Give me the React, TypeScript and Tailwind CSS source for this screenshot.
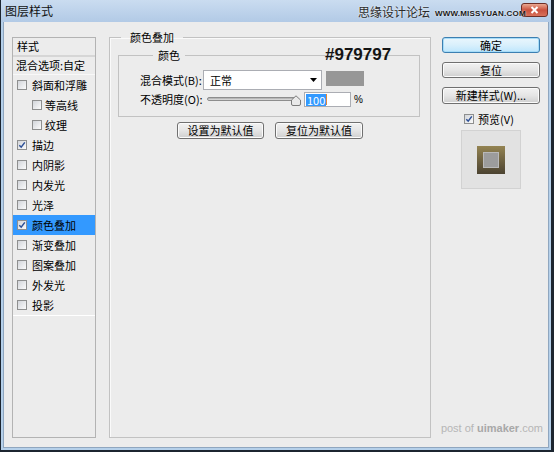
import React from 'react';

const Box = ({ checked }: { checked?: boolean }) => (
  <span className="relative w-[10px] h-[10px] shrink-0 border border-[#8e8f8f] bg-gradient-to-br from-[#d2d5da] to-[#fbfbfb]">
    {checked && (
      <svg width="8" height="8" viewBox="0 0 8 8" className="absolute left-0 top-0">
        <path d="M1.3 4.2 L3.2 6.2 L6.8 1.4" fill="none" stroke="#2c4f96" strokeWidth="1.5" />
      </svg>
    )}
  </span>
);

const Btn = ({ children, primary, w, h }: { children: React.ReactNode; primary?: boolean; w: string; h: string }) => (
  <div
    className={
      primary
        ? `${w} ${h} flex items-center justify-center rounded-[3px] border border-[#3c7fb1] bg-gradient-to-b from-[#eaf6fd] via-[#d9f0fc] to-[#bee6fd] shadow-[inset_0_0_0_1px_#a6dcf8] leading-none`
        : `${w} ${h} flex items-center justify-center rounded-[3px] border border-[#707070] bg-gradient-to-b from-[#f2f2f2] via-[#e5e5e5] to-[#cfcfcf] shadow-[inset_0_0_0_1px_#fbfbfb] leading-none`
    }
  >
    {children}
  </div>
);

const items: { label: string; checked?: boolean; indent?: boolean; active?: boolean }[] = [
  { label: '斜面和浮雕' },
  { label: '等高线', indent: true },
  { label: '纹理', indent: true },
  { label: '描边', checked: true },
  { label: '内阴影' },
  { label: '内发光' },
  { label: '光泽' },
  { label: '颜色叠加', checked: true, active: true },
  { label: '渐变叠加' },
  { label: '图案叠加' },
  { label: '外发光' },
  { label: '投影' },
];

export default function App() {
  return (
    <div className="w-[554px] h-[452px] flex bg-[#1c2530] pl-px pr-[3px] pb-[2px] text-[11px] text-black font-['Noto_Sans_CJK_SC','Noto_Sans',sans-serif]">
      <div className="flex-1 flex flex-col bg-[#b5d0ea]">
        {/* title bar */}
        <div className="relative h-[22px] flex items-start bg-gradient-to-b from-[#cadcf0] to-[#b2cae6]">
          <span className="pl-[4px] pt-[4px] text-[12px] leading-[14px] text-[#111]">图层样式</span>
          <div className="ml-auto mr-[3px] mt-[3px] w-[27px] h-[14px] rounded-[3px] border border-[#6e2e26] bg-gradient-to-b from-[#e9a792] via-[#c9503e] to-[#d8705a] flex items-center justify-center">
            <svg width="9" height="8" viewBox="0 0 9 8">
              <path d="M1.5 1 L7.5 7 M7.5 1 L1.5 7" stroke="#fff" strokeWidth="2" />
            </svg>
          </div>
          <div className="absolute left-[357px] top-[5px] flex items-end gap-[5px]">
            <span className="text-[12px] leading-[14px] text-[#2a2a2a] [text-shadow:0_0_2px_#fff]">思缘设计论坛</span>
            <span className="text-[8px] leading-[11px] font-bold tracking-[0.2px] text-[#1a1a1a] font-['Liberation_Sans',sans-serif] [text-shadow:0_0_2px_#fff]">
              WWW.MISSYUAN.COM
            </span>
          </div>
        </div>

        {/* body */}
        <div className="relative flex-1 mx-[2px] mb-[2px] bg-[#ececec] border border-t-0 border-[#8fa6bf] flex items-start pt-[8px] pl-[8px]">
          {/* left list */}
          <div className="mt-[7px] w-[84px] h-[401px] border border-[#b3b3b3] flex flex-col">
            <div className="h-[19px] flex items-center pl-[4px] border-b-2 border-[#d6d6d6]">样式</div>
            <div className="h-[18px] flex items-center pl-[3px] border-b border-[#f8f8f8]">混合选项:自定</div>
            <div className="flex flex-col border-b border-white">
              {items.map(it => (
                <div
                  key={it.label}
                  className={
                    it.active
                      ? 'h-[20px] flex items-center gap-[5px] pl-[4px] bg-[#3399ff]'
                      : it.indent
                        ? 'h-[20px] flex items-center gap-[3px] pl-[19px]'
                        : 'h-[20px] flex items-center gap-[5px] pl-[4px]'
                  }
                >
                  <Box checked={it.checked} />
                  <span>{it.label}</span>
                </div>
              ))}
            </div>
          </div>

          {/* middle */}
          <div className="relative ml-[13px]">
            <fieldset className="w-[322px] h-[408px] border border-[#c2c2c2] shadow-[inset_1px_1px_0_#fafafa]">
              <legend className="ml-[11px] px-[9px] leading-[14px]">颜色叠加</legend>
              <fieldset className="mt-[4px] ml-[8px] mr-[10px] border border-[#c2c2c2] pl-[21px] pb-[9px]">
                <legend className="ml-[13px] px-[5px] leading-[14px]">颜色</legend>
                <div className="mt-[8px] flex items-center h-[20px]">
                  <span className="w-[63px]">混合模式(B):</span>
                  <div className="w-[119px] h-[20px] bg-white border border-[#abadb3] flex items-center pl-[6px] pr-[4px]">
                    <span>正常</span>
                    <svg width="7" height="4" viewBox="0 0 7 4" className="ml-auto">
                      <path d="M0 0 H7 L3.5 4 Z" fill="#000" />
                    </svg>
                  </div>
                  <div className="ml-[4px] self-start mt-px w-[38px] h-[15px] bg-[#979797]" />
                </div>
                <div className="mt-[2px] flex items-center h-[15px]">
                  <span className="w-[63px]">不透明度(O):</span>
                  <div className="relative ml-[4px] w-[93px] h-[15px] flex items-start pt-[5px]">
                    <div className="w-[91px] h-[4px] rounded-full border border-[#8d8d8d] bg-gradient-to-b from-[#a9a9a9] to-[#e3e3e3]" />
                    <svg width="10" height="11" viewBox="0 0 10 11" className="absolute left-[84px] top-[3px]">
                      <path d="M0.5 5 L5 0.8 L9.5 5 V9 Q9.5 10.5 8 10.5 H2 Q0.5 10.5 0.5 9 Z" fill="#e9e9e9" stroke="#7b7b7b" />
                    </svg>
                  </div>
                  <div className="ml-[4px] w-[47px] h-[15px] bg-white border border-[#abadb3] flex items-center pl-px">
                    <span className="bg-[#3399ff] text-white leading-[12px] px-px">100</span>
                    <span className="w-px h-[11px] bg-[#e0883a]" />
                  </div>
                  <span className="ml-[3px] font-['Liberation_Sans',sans-serif] text-[10px]">%</span>
                </div>
              </fieldset>
              <div className="mt-[5px] flex justify-center gap-[11px]">
                <Btn w="w-[87px]" h="h-[17px]">设置为默认值</Btn>
                <Btn w="w-[88px]" h="h-[17px]">复位为默认值</Btn>
              </div>
            </fieldset>
            <span className="absolute left-[216px] top-[16px] text-[17px] leading-[18px] font-semibold text-[#141414] font-['Liberation_Sans',sans-serif]">
              #979797
            </span>
          </div>

          {/* right column */}
          <div className="ml-[11px] mt-[7px] w-[98px] flex flex-col items-center">
            <Btn primary w="w-[98px]" h="h-[16px]">确定</Btn>
            <div className="mt-[9px]">
              <Btn w="w-[98px]" h="h-[16px]">复位</Btn>
            </div>
            <div className="mt-[9px]">
              <Btn w="w-[98px]" h="h-[17px]">新建样式(W)...</Btn>
            </div>
            <div className="mt-[9px] flex items-center gap-[4px] h-[12px] pr-[4px]">
              <Box checked />
              <span>预览(V)</span>
            </div>
            <div className="mt-[5px] w-[60px] h-[59px] bg-[#e2e2e2] border border-[#d2d2d2] flex items-center justify-center">
              <div className="w-[28px] h-[28px] bg-gradient-to-b from-[#948452] to-[#4c4331] flex items-center justify-center">
                <div className="w-[16px] h-[16px] bg-[#9c9c9c] border border-[#b9b9b9]" />
              </div>
            </div>
          </div>

          <div className="absolute right-[5px] bottom-[13px] text-[11px] leading-[12px] text-[#b6b6b6] font-['Liberation_Sans',sans-serif]">
            post of <span className="font-bold text-[#a8a8a8]">uimaker</span>.com
          </div>
        </div>
      </div>
    </div>
  );
}
